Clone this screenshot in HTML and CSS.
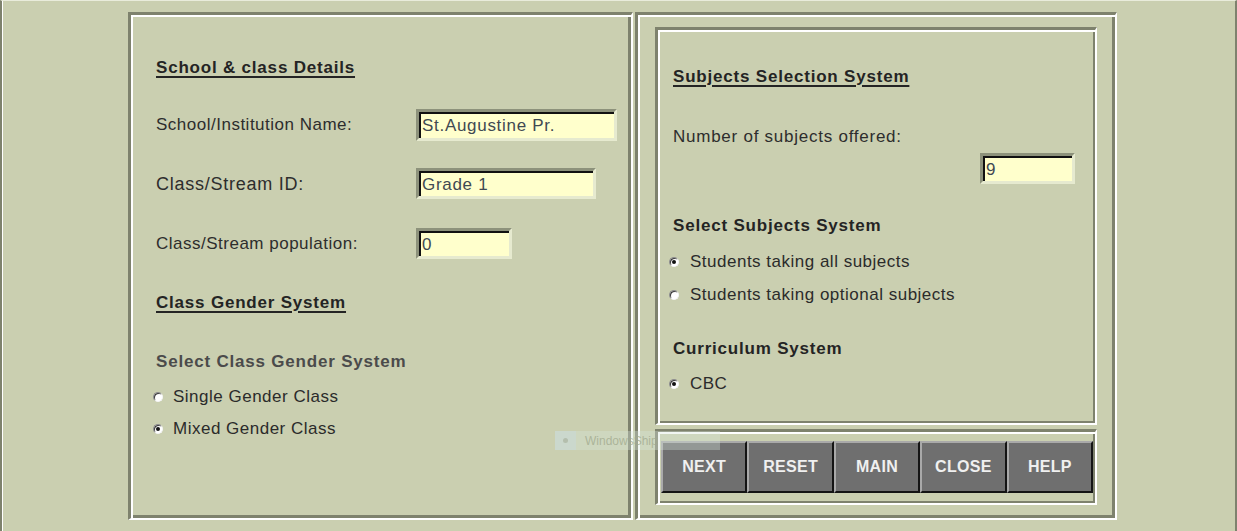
FILE: index.html
```html
<!DOCTYPE html>
<html lang="en">
<head>
<meta charset="utf-8">
<title>School &amp; class Details</title>
<link rel="stylesheet" href="styles.css">
</head>
<body>
<div class="window">
  <div class="frame">
    <section class="panel panel-left">
      <h2 class="heading u h-school">School &amp; class Details</h2>
      <div class="field f-name">
        <span class="label">School/Institution Name:</span>
        <div class="input w-name">St.Augustine Pr.</div>
      </div>
      <div class="field f-class">
        <span class="label big">Class/Stream ID:</span>
        <div class="input w-class">Grade 1</div>
      </div>
      <div class="field f-pop">
        <span class="label">Class/Stream population:</span>
        <div class="input w-pop">0</div>
      </div>
      <h2 class="heading u h-gender">Class Gender System</h2>
      <h3 class="heading sub h-select">Select Class Gender System</h3>
      <div class="radio r-single"><span class="dot"></span><span class="rtext">Single Gender Class</span></div>
      <div class="radio r-mixed"><span class="dot on"></span><span class="rtext">Mixed Gender Class</span></div>
    </section>
    <section class="panel panel-right">
      <div class="box box-main">
        <h2 class="heading u h-subjects">Subjects Selection System</h2>
        <div class="label l-number">Number of subjects offered:</div>
        <div class="input w-num">9</div>
        <h3 class="heading h-selsub">Select Subjects System</h3>
        <div class="radio r-all"><span class="dot on"></span><span class="rtext">Students taking all subjects</span></div>
        <div class="radio r-opt"><span class="dot"></span><span class="rtext">Students taking optional subjects</span></div>
        <h3 class="heading h-curr">Curriculum System</h3>
        <div class="radio r-cbc"><span class="dot on"></span><span class="rtext">CBC</span></div>
      </div>
      <div class="box box-buttons">
        <button class="btn">NEXT</button>
        <button class="btn">RESET</button>
        <button class="btn">MAIN</button>
        <button class="btn">CLOSE</button>
        <button class="btn">HELP</button>
      </div>
    </section>
  </div>
  <div class="tip"><span class="tip-icon"><span class="tip-dot"></span></span><span class="tip-text">WindowsShip</span></div>
</div>
</body>
</html>
```
FILE: styles.css
```css
* { box-sizing: border-box; margin: 0; padding: 0; }
html, body { width: 1237px; height: 531px; overflow: hidden; }
body {
  background: #cacfb0;
  font-family: "Liberation Sans", Arial, sans-serif;
  color: #2b2b2b;
}
.window {
  position: relative;
  width: 1237px;
  height: 531px;
  border-left: 2px solid #7e826d;
  border-right: 2px solid #7e826d;
  border-top: 1px solid #e9ecdb;
  box-shadow: inset 1px 0 0 #ffffff;
  padding: 11px 0 0 126px;
}
.frame {
  display: flex;
  gap: 2px;
}
.panel {
  height: 508px;
  border-style: solid;
  border-width: 3px 2px 2px 3px;
  border-color: #7e826d #ffffff #ffffff #7e826d;
  box-shadow: inset 2px 2px 0 #ffffff, inset -3px -3px 0 #7e826d;
  display: flex;
  flex-direction: column;
  align-items: flex-start;
}
.panel-left {
  width: 505px;
  padding: 41px 0 0 25px;
}
.panel-right {
  width: 482px;
  padding: 12px 0 0 17px;
}
.heading {
  font-size: 17px;
  font-weight: bold;
  line-height: 23px;
  height: 23px;
  letter-spacing: 0.8px;
  color: #242424;
}
.heading.u {
  text-decoration: underline;
  text-decoration-thickness: 2px;
  text-underline-offset: 3px;
}
.heading.sub { color: #4b4b4b; }
.label {
  font-size: 17px;
  line-height: 20px;
  letter-spacing: 0.5px;
  color: #2d2d2d;
}
.label.big { font-size: 18px; letter-spacing: 0.75px; }
.field {
  display: flex;
  align-items: center;
}
.field .label { width: 260px; flex: none; }
.input {
  height: 31px;
  background: #ffffcc;
  border-style: solid;
  border-width: 3px;
  border-color: #8d927b #e6eacf #e6eacf #8d927b;
  box-shadow: inset 2px 2px 0 #111111;
  padding: 4px 0 0 3px;
  font-size: 17px;
  line-height: 20px;
  letter-spacing: 0.7px;
  color: #3f4952;
}
.w-name { width: 201px; height: 32px; }
.w-class { width: 180px; }
.w-pop { width: 96px; }
.w-num { width: 95px; }
.h-school { margin-top: 0; }
.f-name { margin-top: 30px; }
.f-class { margin-top: 27px; }
.f-pop { margin-top: 29px; }
.h-gender { margin-top: 32px; }
.h-select { margin-top: 37px; line-height: 22px; height: 22px; }
.radio {
  display: flex;
  align-items: center;
  height: 20px;
  font-size: 17px;
  letter-spacing: 0.5px;
  color: #2b2b2b;
}
.dot {
  position: relative;
  width: 10px;
  height: 10px;
  border-radius: 50%;
  background: #ffffff;
  border: 1px solid;
  border-color: #8a8a8a #f4f4f4 #f4f4f4 #8a8a8a;
  box-shadow: inset 1px 1px 0 #3a3a3a;
  flex: none;
}
.dot.on::after {
  content: "";
  position: absolute;
  left: 2px;
  top: 2px;
  width: 4px;
  height: 4px;
  border-radius: 50%;
  background: #111111;
}
.rtext { margin-left: 10px; }
.panel-left .radio { margin-left: -3px; }
.r-single { margin-top: 14px; }
.r-mixed { margin-top: 12px; }
.box {
  width: 442px;
  border-style: solid;
  border-width: 3px 2px 2px 3px;
  border-color: #7e826d #ffffff #ffffff #7e826d;
  box-shadow: inset 2px 2px 0 #ffffff, inset -2px -2px 0 #7e826d;
}
.box-main {
  height: 398px;
  padding: 35px 0 0 15px;
  display: flex;
  flex-direction: column;
  align-items: flex-start;
}
.l-number { margin-top: 39px; letter-spacing: 0.75px; }
.w-num { margin-top: 6px; align-self: flex-end; margin-right: 20px; }
.h-selsub { margin-top: 31px; line-height: 22px; height: 22px; }
.box-main .radio { margin-left: -4px; }
.box-main .rtext { margin-left: 11px; }
.r-all { margin-top: 15px; }
.r-opt { margin-top: 13px; }
.h-curr { margin-top: 33px; line-height: 22px; height: 22px; }
.r-cbc { margin-top: 14px; }
.box-buttons {
  margin-top: 4px;
  height: 76px;
  padding: 9px 2px 0 3px;
  display: flex;
}
.btn {
  flex: 1;
  height: 52px;
  background: #6f6f6f;
  border-style: solid;
  border-width: 2px;
  border-color: #a9a9a9 #141414 #141414 #a9a9a9;
  color: #f0f0f0;
  font-family: "Liberation Sans", Arial, sans-serif;
  font-weight: bold;
  font-size: 16px;
  letter-spacing: 0.3px;
}
.tip {
  position: absolute;
  left: 553px;
  top: 430px;
  width: 165px;
  height: 19px;
  display: flex;
  align-items: center;
  background: rgba(214, 228, 222, 0.35);
}
.tip-icon {
  width: 21px;
  height: 19px;
  background: rgba(200, 218, 222, 0.45);
  display: flex;
  align-items: center;
  justify-content: center;
}
.tip-dot {
  width: 5px;
  height: 5px;
  border-radius: 50%;
  background: rgba(170, 180, 160, 0.7);
}
.tip-text {
  margin-left: 9px;
  font-family: "Liberation Sans", Arial, sans-serif;
  font-size: 12px;
  color: rgba(160, 168, 140, 0.75);
}
```
